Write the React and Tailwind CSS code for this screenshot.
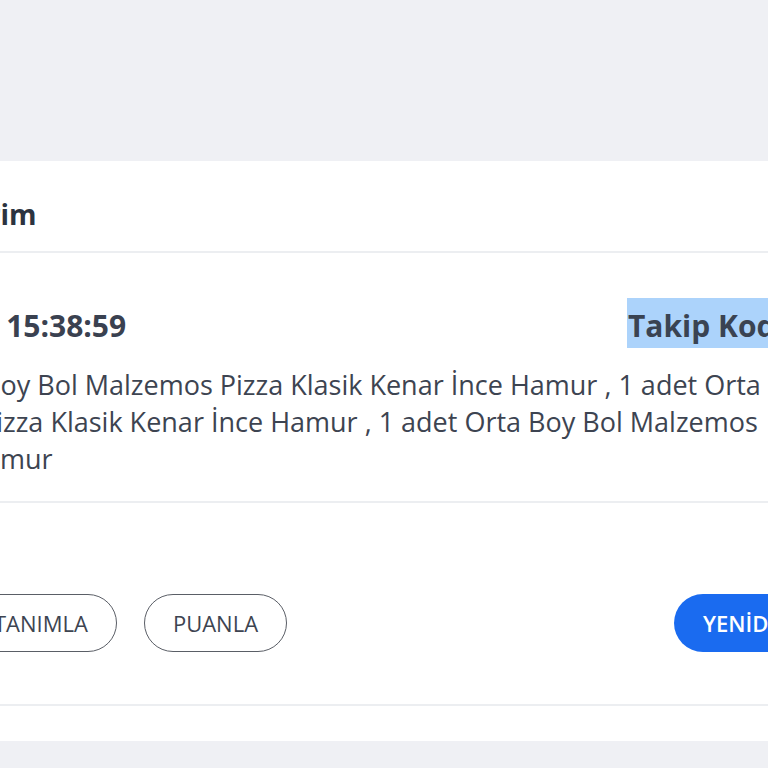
import React from "react";

export default function App() {
  const font = { fontFamily: '"Open Sans", "Noto Sans", sans-serif' };
  return (
    <div
      className="w-[768px] h-[768px] overflow-hidden bg-[#eff0f4] pt-[161px]"
      style={font}
    >
      <div className="bg-white h-[580px] flex flex-col">
        {/* header */}
        <div className="h-[92px] flex items-center border-b-2 border-[#eceef1] whitespace-nowrap">
          <div className="ml-[-131px] text-[28px] font-bold text-[#2c3340] leading-none pt-[16px]">
            Siparişlerim
          </div>
        </div>

        {/* order info */}
        <div className="h-[250px] border-b-2 border-[#eceef1] flex flex-col whitespace-nowrap">
          <div className="flex items-center justify-between h-[50px] mt-[45px]">
            <div className="ml-[-156px] text-[30px] font-bold text-[#3a4150] leading-[44px] pt-[6px]">
              12.03.2019 15:38:59
            </div>
            <div className="w-[141px] h-[50px] shrink-0 bg-[#acd3fb] text-[30px] font-bold text-[#3a4352] leading-[44px] pt-[6px] pl-[1px]">
              Takip Kodu
            </div>
          </div>
          <div className="mt-[18px] text-[27px] text-[#3d4451] leading-[37px]">
            <div className="ml-[-17px]">Boy Bol Malzemos Pizza Klasik Kenar İnce Hamur , 1 adet Orta</div>
            <div className="ml-[-20px]">Pizza Klasik Kenar İnce Hamur , 1 adet Orta Boy Bol Malzemos</div>
            <div className="ml-[-35px]">Hamur</div>
          </div>
        </div>

        {/* actions */}
        <div className="h-[203px] border-b-2 border-[#eceef1] flex items-start justify-between pt-[91px] whitespace-nowrap">
          <div className="flex items-center gap-[27px] ml-[-35px]">
            <button className="h-[58px] px-[28px] rounded-full border-[1.5px] border-[#5a5e66] text-[22px] text-[#3d4451] flex items-center justify-center">
              TANIMLA
            </button>
            <button className="h-[58px] px-[28px] rounded-full border-[1.5px] border-[#5a5e66] text-[22px] text-[#3d4451] flex items-center justify-center">
              PUANLA
            </button>
          </div>
          <button className="h-[58px] w-[94px] shrink-0 rounded-l-full bg-[#1a6bf0] text-white text-[22px] font-semibold flex items-center pl-[29px]">
            YENİDEN
          </button>
        </div>
      </div>
    </div>
  );
}
